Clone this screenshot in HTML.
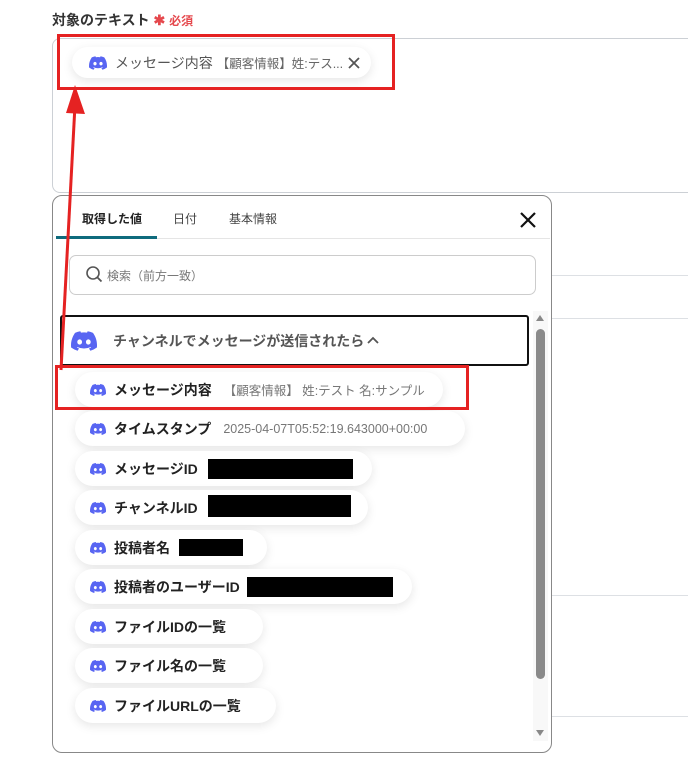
<!DOCTYPE html>
<html><head><meta charset="utf-8"><style>
*{box-sizing:border-box;margin:0;padding:0}
body{width:688px;height:767px;background:#fff;position:relative;overflow:hidden;font-family:"Liberation Sans","Noto Sans CJK JP",sans-serif;color:#222}
.abs{position:absolute}
.hl{position:absolute;left:552px;width:136px;height:1px;background:#dde0e4}
.chip{position:absolute;left:75px;height:35px;border-radius:18px;background:#fff;box-shadow:0 3px 10px rgba(0,0,0,.10);display:flex;align-items:center;padding-left:15px;font-size:14px;font-weight:bold;color:#222;white-space:nowrap}
.chip svg{margin-right:8px}
.chip .v{font-weight:normal;color:#777;font-size:12.5px;margin-left:12px}
.blk{position:absolute;background:#000}
</style></head><body>
<svg width="0" height="0" style="position:absolute"><defs><symbol id="d" viewBox="0 0 24 18"><path fill="#5865F2" d="M20.3 1.5A19.6 19.6 0 0 0 15.4 0l-.6 1.3a18 18 0 0 0-5.6 0L8.6 0a19.6 19.6 0 0 0-4.9 1.5C.6 6.1-.3 10.6.1 15a19.8 19.8 0 0 0 6 3l1.3-2.1c-.7-.3-1.4-.6-2-1l.5-.4a14 14 0 0 0 12.2 0l.5.4c-.6.4-1.3.7-2 1l1.3 2.1a19.8 19.8 0 0 0 6-3c.5-5.1-.8-9.6-3.6-13.5zM8 12.3c-1.2 0-2.2-1.1-2.2-2.4S6.8 7.5 8 7.5s2.2 1.1 2.2 2.4-1 2.4-2.2 2.4zm8 0c-1.2 0-2.2-1.1-2.2-2.4s1-2.4 2.2-2.4 2.2 1.1 2.2 2.4-1 2.4-2.2 2.4z"/></symbol></defs></svg>

<div class="abs" style="left:52px;top:10px;font-size:14px;font-weight:bold;color:#333">対象のテキスト <span style="color:#e5484d">✱</span> <span style="color:#e5484d;font-size:12px">必須</span></div>
<div class="abs" style="left:52px;top:38px;width:660px;height:155px;border:1px solid #ccd0d5;border-radius:8px"></div>
<div class="chip" style="left:72px;top:47px;width:299px;height:31px;font-weight:normal;color:#555;padding-left:17px"><svg width="18" height="14"><use href="#d"/></svg>メッセージ内容 <span style="font-size:12.5px;color:#666;margin-left:4px">【顧客情報】姓:テス...</span><svg style="position:absolute;right:10px;margin:0" width="14" height="14"><path d="M2 2L12 12M12 2L2 12" stroke="#555" stroke-width="1.8"/></svg></div>
<div class="abs" style="left:57px;top:34px;width:338px;height:56px;border:3px solid #e52222"></div>

<div class="hl" style="top:275px"></div><div class="hl" style="top:318px"></div><div class="hl" style="top:595px"></div><div class="hl" style="top:716px"></div>

<div class="abs" style="left:52px;top:195px;width:500px;height:558px;border:1px solid #888;border-radius:10px;background:#fff"></div>
<div class="abs" style="left:82px;top:210px;font-size:12px;font-weight:bold">取得した値</div>
<div class="abs" style="left:173px;top:210px;font-size:12px;color:#444">日付</div>
<div class="abs" style="left:229px;top:210px;font-size:12px;color:#444">基本情報</div>
<svg class="abs" style="left:519px;top:211px" width="18" height="18"><path d="M2 2L16 16M16 2L2 16" stroke="#111" stroke-width="2.2"/></svg>
<div class="abs" style="left:56px;top:238px;width:494px;height:1px;background:#e5e5e5"></div>
<div class="abs" style="left:56px;top:236px;width:101px;height:3px;background:#0f6b7d"></div>
<div class="abs" style="left:69px;top:255px;width:467px;height:40px;border:1px solid #ccc;border-radius:7px"></div>
<svg class="abs" style="left:85px;top:265px" width="20" height="20"><circle cx="8" cy="8" r="6" fill="none" stroke="#555" stroke-width="1.6"/><path d="M12.5 12.5l4 4" stroke="#555" stroke-width="1.8"/></svg>
<div class="abs" style="left:107px;top:267px;font-size:12px;color:#777">検索（前方一致）</div>

<div class="abs" style="left:60px;top:315px;width:469px;height:51px;border:2px solid #111;border-radius:3px"></div>
<svg class="abs" style="left:71px;top:331px" width="26" height="20"><use href="#d"/></svg>
<div class="abs" style="left:113px;top:331px;font-size:14px;color:#555;font-weight:bold">チャンネルでメッセージが送信されたら</div>
<svg class="abs" style="left:367px;top:336px" width="12" height="8"><path d="M1 7L6 2L11 7" fill="none" stroke="#555" stroke-width="1.8"/></svg>

<div class="abs" style="left:533px;top:311px;width:15px;height:430px;background:#f8f8f8"></div>
<div class="abs" style="left:536px;top:329px;width:9px;height:350px;border-radius:5px;background:#8a8a8a"></div>
<div class="abs" style="left:536px;top:315px;width:0;height:0;border-left:4px solid transparent;border-right:4px solid transparent;border-bottom:6px solid #888"></div>
<div class="abs" style="left:536px;top:730px;width:0;height:0;border-left:4px solid transparent;border-right:4px solid transparent;border-top:6px solid #888"></div>

<div class="chip" style="top:372px;width:368px"><svg width="16" height="12"><use href="#d"/></svg>メッセージ内容<span class="v">【顧客情報】 姓:テスト 名:サンプル</span></div>
<div class="chip" style="top:411px;width:390px"><svg width="16" height="12"><use href="#d"/></svg>タイムスタンプ<span class="v">2025-04-07T05:52:19.643000+00:00</span></div>
<div class="chip" style="top:451px;width:297px"><svg width="16" height="12"><use href="#d"/></svg>メッセージID</div>
<div class="chip" style="top:490px;width:293px"><svg width="16" height="12"><use href="#d"/></svg>チャンネルID</div>
<div class="chip" style="top:530px;width:192px"><svg width="16" height="12"><use href="#d"/></svg>投稿者名</div>
<div class="chip" style="top:569px;width:337px"><svg width="16" height="12"><use href="#d"/></svg>投稿者のユーザーID</div>
<div class="chip" style="top:609px;width:188px"><svg width="16" height="12"><use href="#d"/></svg>ファイルIDの一覧</div>
<div class="chip" style="top:648px;width:188px"><svg width="16" height="12"><use href="#d"/></svg>ファイル名の一覧</div>
<div class="chip" style="top:688px;width:201px"><svg width="16" height="12"><use href="#d"/></svg>ファイルURLの一覧</div>
<div class="blk" style="left:208px;top:459px;width:145px;height:20px"></div>
<div class="blk" style="left:208px;top:495px;width:143px;height:22px"></div>
<div class="blk" style="left:179px;top:539px;width:64px;height:17px"></div>
<div class="blk" style="left:247px;top:577px;width:146px;height:20px"></div>

<div class="abs" style="left:55px;top:365px;width:414px;height:45px;border:3px solid #e52222"></div>
<svg class="abs" style="left:0;top:0" width="688" height="767"><path d="M61 370L75 105" stroke="#e52222" stroke-width="3"/><path d="M66 113L75 85L85 114Z" fill="#e52222"/></svg>
</body></html>
